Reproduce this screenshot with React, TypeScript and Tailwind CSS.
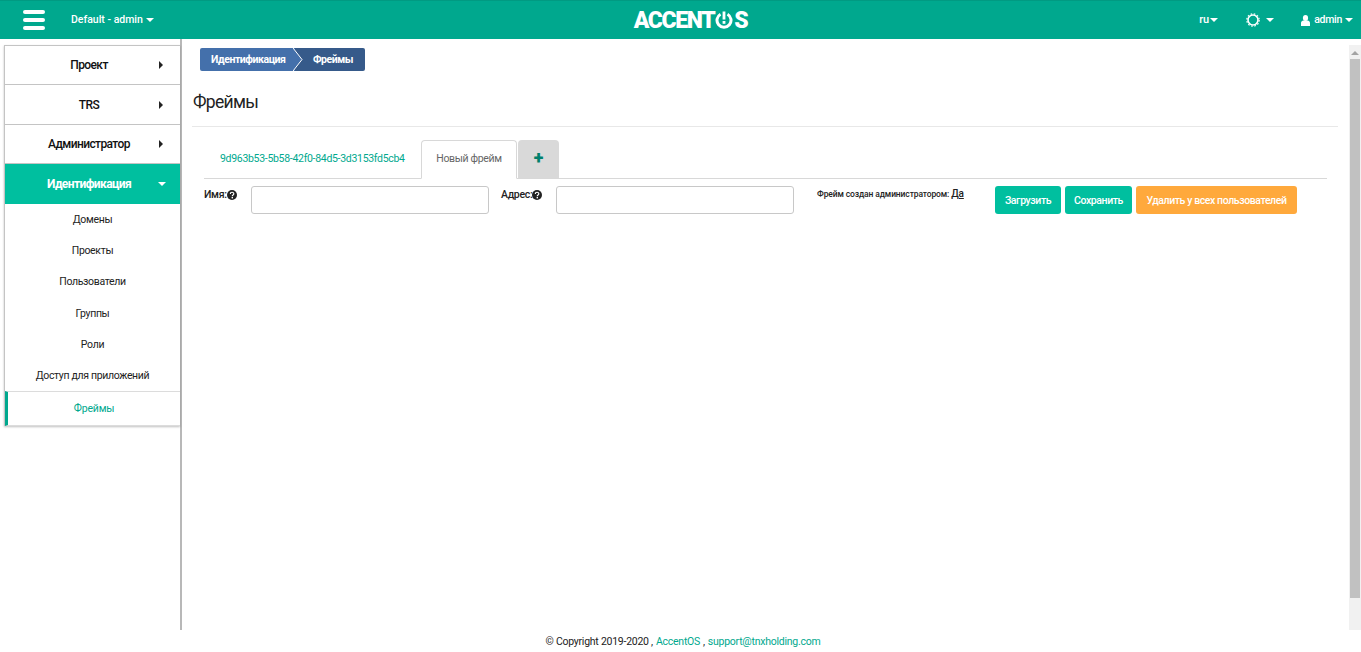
const font = { fontFamily: '"Roboto", "Liberation Sans", sans-serif' };

function Caret({ className = "" }: { className?: string }) {
  return (
    <span
      className={`inline-block h-0 w-0 border-x-[4px] border-t-[4px] border-x-transparent border-t-white ${className}`}
    />
  );
}

function Help() {
  return (
    <svg width="10" height="10" viewBox="0 0 10 10" className="shrink-0">
      <circle cx="5" cy="5" r="5" fill="#222" />
      <path d="M3.3 3.9c0-2.2 3.5-2.2 3.5-.1 0 1.3-1.5 1.2-1.5 2.4" fill="none" stroke="#fff" strokeWidth="1.2" />
      <rect x="4.6" y="7" width="1.4" height="1.4" fill="#fff" />
    </svg>
  );
}

function Hamburger() {
  return (
    <div className="flex w-[22px] flex-col gap-[4px]">
      <span className="h-[4px] rounded-[2px] bg-white" />
      <span className="h-[4px] rounded-[2px] bg-white" />
      <span className="h-[4px] rounded-[2px] bg-white" />
    </div>
  );
}

function Logo() {
  return (
    <div className="flex items-center text-[23px] font-black leading-none tracking-[-1.4px] text-white">
      <span>ACCENT</span>
      <svg width="18" height="18" viewBox="0 0 18 18" className="mx-[1px]">
        <path d="M5.5 3.2a7 7 0 1 0 7 0" fill="none" stroke="#fff" strokeWidth="3" />
        <rect x="7.6" y="0.5" width="2.8" height="8" fill="#fff" />
        <rect x="7.6" y="10" width="2.8" height="2.8" fill="#fff" />
      </svg>
      <span>S</span>
    </div>
  );
}

function Header() {
  return (
    <header className="flex h-[39px] shrink-0 items-center border-t border-[#019a82] bg-[#00a88e] text-white">
      <div className="ml-[23px]">
        <Hamburger />
      </div>
      <div className="ml-[26px] flex items-center gap-[3px] text-[10.5px] font-medium">
        <span>Default - admin</span>
        <Caret />
      </div>
      <div className="flex flex-1 justify-center pl-[28px]">
        <Logo />
      </div>
      <div className="flex items-center text-[10.5px] font-medium">
        <span className="text-[11px]">ru</span>
        <Caret className="ml-[1px]" />
        <svg width="14" height="14" viewBox="0 0 14 14" className="ml-[28px]">
          <circle cx="7" cy="7" r="5" fill="none" stroke="#fff" strokeWidth="1.6" />
          <circle cx="7" cy="7" r="6.2" fill="none" stroke="#fff" strokeWidth="1.2" strokeDasharray="1.6 1.65" />
        </svg>
        <Caret className="ml-[6px]" />
        <svg width="9" height="11" viewBox="0 0 9 11" className="ml-[27px]">
          <ellipse cx="4.5" cy="3" rx="2.6" ry="3" fill="#fff" />
          <path d="M0 11V8.2C0 6.6 1.2 6 2.4 5.6h4.2C7.8 6 9 6.6 9 8.2V11z" fill="#fff" />
        </svg>
        <span className="ml-[4px] tracking-[-0.3px]">admin</span>
        <Caret className="ml-[3px] mr-[8px]" />
      </div>
    </header>
  );
}

function TopItem({ label, active, height }: { label: string; active?: boolean; height: string }) {
  return (
    <div
      className={`flex items-center text-[12px] tracking-[-0.6px] ${height} ${
        active ? "bg-[#00bf9f] font-bold text-white" : "border-b border-[#c4c4c4] bg-white font-medium text-[#111]"
      }`}
    >
      <span className="ml-[14px] w-[140px] text-center">{label}</span>
      {active ? (
        <Caret className="ml-[-1px]" />
      ) : (
        <span className="h-0 w-0 border-y-[4px] border-l-[4px] border-y-transparent border-l-[#222]" />
      )}
    </div>
  );
}

function Sidebar() {
  const subItems = ["Домены", "Проекты", "Пользователи", "Группы", "Роли", "Доступ для приложений"];
  return (
    <aside className="w-[182px] shrink-0 border-r-2 border-[#b8b8b8] pl-[4px] pt-[6px]">
      <div className="border-l border-t border-[#c4c4c4] shadow-[0_1px_2px_rgba(0,0,0,0.25)]">
        <TopItem label="Проект" height="h-[39px]" />
        <TopItem label="TRS" height="h-[40px]" />
        <TopItem label="Администратор" height="h-[39px]" />
        <TopItem label="Идентификация" height="h-[40px]" active />
        <div className="flex flex-col">
          {subItems.map((item) => (
            <div key={item} className="flex h-[31px] items-center justify-center text-[10.5px] tracking-[-0.33px] text-[#222] nth-3:h-[32px]">
              {item}
            </div>
          ))}
        </div>
        <div className="flex h-[35px] items-center justify-center border-y border-y-[#dcdcdc] border-l-[3px] border-l-[#00a88e] text-[10.5px] tracking-[-0.2px] text-[#00a88e]">
          Фреймы
        </div>
      </div>
    </aside>
  );
}

function Breadcrumbs() {
  return (
    <div className="ml-[18px] flex h-[23px] w-[165px] overflow-hidden rounded-[2px] text-[10.5px] font-bold tracking-[-0.45px] text-white">
      <div className="relative flex w-[95px] items-center bg-[#4470ab] pl-[11px]">
        Идентификация
        <svg width="10" height="23" viewBox="0 0 10 23" className="absolute right-[-8px] top-0 z-10">
          <path d="M0 0l9 11.5L0 23h-1V0z" fill="#4470ab" />
          <path d="M0 0l9 11.5L0 23" fill="none" stroke="#fff" strokeWidth="1" />
        </svg>
      </div>
      <div className="flex flex-1 items-center bg-[#365a8a] pl-[18px]">Фреймы</div>
    </div>
  );
}

function Tabs() {
  return (
    <div className="ml-[22px] mr-[22px] mt-[13px] flex h-[39px] items-end border-b border-[#d8d8d8] text-[10.5px]">
      <div className="flex h-[38px] w-[217px] items-center pb-[1px] pl-[16px] tracking-[-0.3px] text-[#00a88e]">
        9d963b53-5b58-42f0-84d5-3d3153fd5cb4
      </div>
      <div className="mb-[-1px] flex h-[39px] w-[96px] items-center justify-center rounded-t-[4px] border border-[#d8d8d8] border-b-white bg-white pb-[1px] tracking-[-0.35px] text-[#666]">
        Новый фрейм
      </div>
      <div className="ml-[1px] flex h-[38px] w-[41px] items-center justify-center rounded-t-[4px] bg-[#d9d9d9] pb-[2px] text-[18px] font-black leading-none text-[#00806c]">
        +
      </div>
    </div>
  );
}

function Field({ label, labelWidth }: { label: string; labelWidth: string }) {
  return (
    <div className="flex items-start">
      <div className={`flex items-center pt-[1px] text-[10.5px] font-medium tracking-[-0.3px] text-[#222] ${labelWidth}`}>
        {label}
        <Help />
      </div>
      <div className="h-[28px] w-[238px] rounded-[3px] border border-[#c8c8c8] bg-white" />
    </div>
  );
}

function FrameForm() {
  return (
    <div className="ml-[22px] mt-[7px] flex items-start">
      <Field label="Имя:" labelWidth="w-[47px]" />
      <div className="ml-[12px]">
        <Field label="Адрес:" labelWidth="w-[55px]" />
      </div>
      <div className="ml-[23px] mt-[1px] w-[178px] text-[8.5px] font-medium leading-[14px] tracking-[-0.12px] text-[#222]">
        Фрейм создан администратором: <span className="text-[10px] underline">Да</span>
      </div>
      <div className="flex gap-[4px] text-[10.5px] font-medium tracking-[-0.4px] text-white">
        <button className="h-[28px] w-[66px] rounded-[3px] bg-[#00bf9f] pt-[1px]">Загрузить</button>
        <button className="h-[28px] w-[67px] rounded-[3px] bg-[#00bf9f] pt-[1px]">Сохранить</button>
        <button className="h-[28px] w-[161px] rounded-[3px] bg-[#ffa93c] pt-[1px]">Удалить у всех пользователей</button>
      </div>
    </div>
  );
}

function Scrollbar() {
  return (
    <div className="flex w-[12px] shrink-0 flex-col items-center bg-[#f1f1f1]">
      <span className="mb-[4px] mt-[6px] h-0 w-0 border-x-[4px] border-b-[4px] border-x-transparent border-b-[#a3a3a3]" />
      <div className="h-[539px] w-[10px] bg-[#c1c1c1]" />
    </div>
  );
}

export default function App() {
  return (
    <div className="flex h-[652px] flex-col overflow-hidden bg-white" style={font}>
      <Header />
      <div className="flex h-[591px] shrink-0">
        <Sidebar />
        <main className="min-w-0 flex-1 pt-[9px]">
          <Breadcrumbs />
          <h1 className="ml-[11px] mt-[19px] text-[17.5px] font-normal leading-[24px] tracking-[-0.7px] text-[#222]">Фреймы</h1>
          <div className="ml-[10px] mr-[11px] mt-[12px] border-t border-[#e8e8e8]" />
          <Tabs />
          <FrameForm />
        </main>
        <div className="flex pt-[6px]">
          <Scrollbar />
        </div>
      </div>
      <footer className="flex flex-1 items-center justify-center pl-[5px] pt-[2px] text-[10.5px] tracking-[-0.25px] text-[#222]">
        <span>© Copyright 2019-2020 , </span>
        <span className="ml-[3px] text-[#00a88e]">AccentOS</span>
        <span className="mx-[3px]">,</span>
        <span className="text-[#00a88e]">support@tnxholding.com</span>
      </footer>
    </div>
  );
}
